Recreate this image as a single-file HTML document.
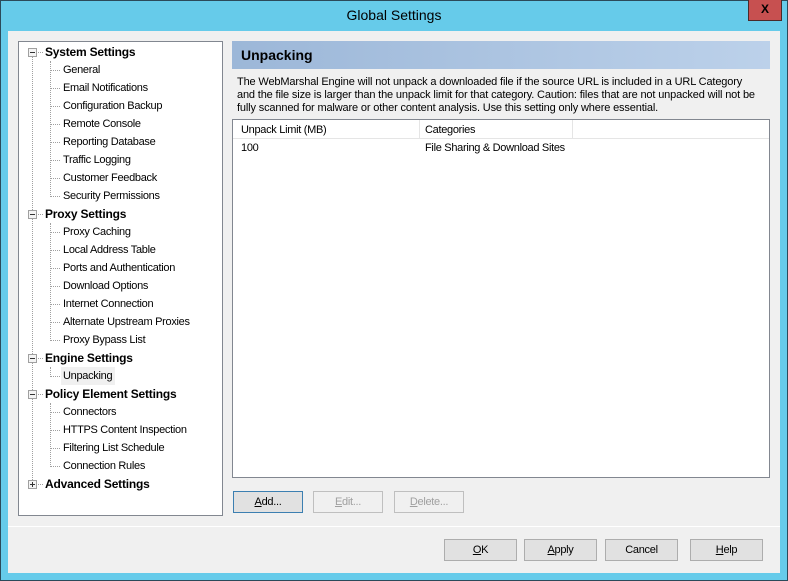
<!DOCTYPE html>
<html><head><style>
*{margin:0;padding:0;box-sizing:border-box}
body{width:788px;height:581px;overflow:hidden;background:#66cbea;font-family:"Liberation Sans",Arial,sans-serif;font-size:11px;letter-spacing:-0.3px;color:#000;position:relative}
.a{position:absolute}
#win{left:0;top:0;width:788px;height:581px;border:1px solid #2b4a5a;}
#title{left:0;top:7px;width:788px;text-align:center;font-size:14px;letter-spacing:0;color:#000}
#close{left:748px;top:0;width:34px;height:21px;background:#c75050;border:1px solid #4a2a2a;border-top:none;text-align:center;font-weight:bold;font-size:12px;line-height:19px;letter-spacing:0}
#client{left:8px;top:31px;width:772px;height:542px;background:#f0f0f0}
#tree{left:18px;top:41px;width:205px;height:475px;background:#fff;border:1px solid #828790}
.r{position:absolute;height:18px;line-height:18px;white-space:nowrap}
.b{font-weight:bold;font-size:12px;letter-spacing:-0.2px}
.exp{position:absolute;width:9px;height:9px;border:1px solid #a0a0a0;background:#f4f4f4}
.exp:before{content:"";position:absolute;left:1px;top:3px;width:5px;height:1px;background:#333}
.exp.p:after{content:"";position:absolute;left:3px;top:1px;width:1px;height:5px;background:#333}
.vl{position:absolute;width:0;border-left:1px dotted #a0a0a0}
.hl{position:absolute;height:0;border-top:1px dotted #a0a0a0}
#hdr{left:232px;top:41px;width:538px;height:28px;background:linear-gradient(to right,#9cb7d8,#bcd1ea);font-weight:bold;font-size:14px;letter-spacing:0;line-height:28px;padding-left:9px}
#para{left:237px;top:76px;width:540px;line-height:13px;white-space:nowrap;letter-spacing:-0.15px}
#list{left:232px;top:119px;width:538px;height:359px;background:#fff;border:1px solid #828790}
.btn{position:absolute;height:22px;border:1px solid #adadad;background:#e1e1e1;text-align:center;line-height:20px}
.dis{color:#a0a0a0;border-color:#bfbfbf;background:#f0f0f0}
#sep{left:8px;top:526px;width:772px;height:1px;background:#a0a0a0;border-bottom:1px solid #fff}
</style></head><body>
<div id="win" class="a"></div>
<div id="title" class="a">Global Settings</div>
<div id="close" class="a">X</div>
<div id="client" class="a"></div>
<div id="tree" class="a"></div>
<div class="a" style="left:0;top:0">
<div class="vl" style="left:32px;top:57px;height:429px"></div>
<div class="vl" style="left:50px;top:61px;height:136px"></div>
<div class="vl" style="left:50px;top:223px;height:118px"></div>
<div class="vl" style="left:50px;top:367px;height:10px"></div>
<div class="vl" style="left:50px;top:403px;height:64px"></div>
</div>
<div class="exp" style="left:28px;top:48px"></div><div class="hl" style="left:38px;top:52px;width:5px"></div><div class="r b" style="left:45px;top:43px">System Settings</div>
<div class="hl" style="left:51px;top:70px;width:9px"></div><div class="r" style="left:63px;top:61px">General</div>
<div class="hl" style="left:51px;top:88px;width:9px"></div><div class="r" style="left:63px;top:79px">Email Notifications</div>
<div class="hl" style="left:51px;top:106px;width:9px"></div><div class="r" style="left:63px;top:97px">Configuration Backup</div>
<div class="hl" style="left:51px;top:124px;width:9px"></div><div class="r" style="left:63px;top:115px">Remote Console</div>
<div class="hl" style="left:51px;top:142px;width:9px"></div><div class="r" style="left:63px;top:133px">Reporting Database</div>
<div class="hl" style="left:51px;top:160px;width:9px"></div><div class="r" style="left:63px;top:151px">Traffic Logging</div>
<div class="hl" style="left:51px;top:178px;width:9px"></div><div class="r" style="left:63px;top:169px">Customer Feedback</div>
<div class="hl" style="left:51px;top:196px;width:9px"></div><div class="r" style="left:63px;top:187px">Security Permissions</div>
<div class="exp" style="left:28px;top:210px"></div><div class="hl" style="left:38px;top:214px;width:5px"></div><div class="r b" style="left:45px;top:205px">Proxy Settings</div>
<div class="hl" style="left:51px;top:232px;width:9px"></div><div class="r" style="left:63px;top:223px">Proxy Caching</div>
<div class="hl" style="left:51px;top:250px;width:9px"></div><div class="r" style="left:63px;top:241px">Local Address Table</div>
<div class="hl" style="left:51px;top:268px;width:9px"></div><div class="r" style="left:63px;top:259px">Ports and Authentication</div>
<div class="hl" style="left:51px;top:286px;width:9px"></div><div class="r" style="left:63px;top:277px">Download Options</div>
<div class="hl" style="left:51px;top:304px;width:9px"></div><div class="r" style="left:63px;top:295px">Internet Connection</div>
<div class="hl" style="left:51px;top:322px;width:9px"></div><div class="r" style="left:63px;top:313px">Alternate Upstream Proxies</div>
<div class="hl" style="left:51px;top:340px;width:9px"></div><div class="r" style="left:63px;top:331px">Proxy Bypass List</div>
<div class="exp" style="left:28px;top:354px"></div><div class="hl" style="left:38px;top:358px;width:5px"></div><div class="r b" style="left:45px;top:349px">Engine Settings</div>
<div class="hl" style="left:51px;top:376px;width:9px"></div><div class="r" style="left:61px;top:367px;background:#f0f0f0;padding:0 3px 0 2px">Unpacking</div>
<div class="exp" style="left:28px;top:390px"></div><div class="hl" style="left:38px;top:394px;width:5px"></div><div class="r b" style="left:45px;top:385px">Policy Element Settings</div>
<div class="hl" style="left:51px;top:412px;width:9px"></div><div class="r" style="left:63px;top:403px">Connectors</div>
<div class="hl" style="left:51px;top:430px;width:9px"></div><div class="r" style="left:63px;top:421px">HTTPS Content Inspection</div>
<div class="hl" style="left:51px;top:448px;width:9px"></div><div class="r" style="left:63px;top:439px">Filtering List Schedule</div>
<div class="hl" style="left:51px;top:466px;width:9px"></div><div class="r" style="left:63px;top:457px">Connection Rules</div>
<div class="exp p" style="left:28px;top:480px"></div><div class="hl" style="left:38px;top:484px;width:5px"></div><div class="r b" style="left:45px;top:475px">Advanced Settings</div>

<div id="hdr" class="a">Unpacking</div>
<div id="para" class="a">The WebMarshal Engine will not unpack a downloaded file if the source URL is included in a URL Category<br>and the file size is larger than the unpack limit for that category. Caution: files that are not unpacked will not be<br>fully scanned for malware or other content analysis. Use this setting only where essential.</div>
<div id="list" class="a">
<div class="a" style="left:0;top:0;width:536px;height:19px;border-bottom:1px solid #e5e5e5"></div>
<div class="a" style="left:186px;top:0;width:1px;height:19px;background:#e5e5e5"></div>
<div class="a" style="left:339px;top:0;width:1px;height:19px;background:#e5e5e5"></div>
<div class="r" style="left:8px;top:1px">Unpack Limit (MB)</div>
<div class="r" style="left:192px;top:1px">Categories</div>
<div class="r" style="left:8px;top:19px">100</div>
<div class="r" style="left:192px;top:19px">File Sharing &amp; Download Sites</div>
</div>
<div class="btn" style="left:233px;top:491px;width:70px;border-color:#3c7fb1;"><u>A</u>dd...</div>
<div class="btn dis" style="left:313px;top:491px;width:70px"><u>E</u>dit...</div>
<div class="btn dis" style="left:394px;top:491px;width:70px"><u>D</u>elete...</div>
<div id="sep" class="a"></div>
<div class="btn" style="left:444px;top:539px;width:73px"><u>O</u>K</div>
<div class="btn" style="left:524px;top:539px;width:73px"><u>A</u>pply</div>
<div class="btn" style="left:605px;top:539px;width:73px">Cancel</div>
<div class="btn" style="left:690px;top:539px;width:73px"><u>H</u>elp</div>
</body></html>
